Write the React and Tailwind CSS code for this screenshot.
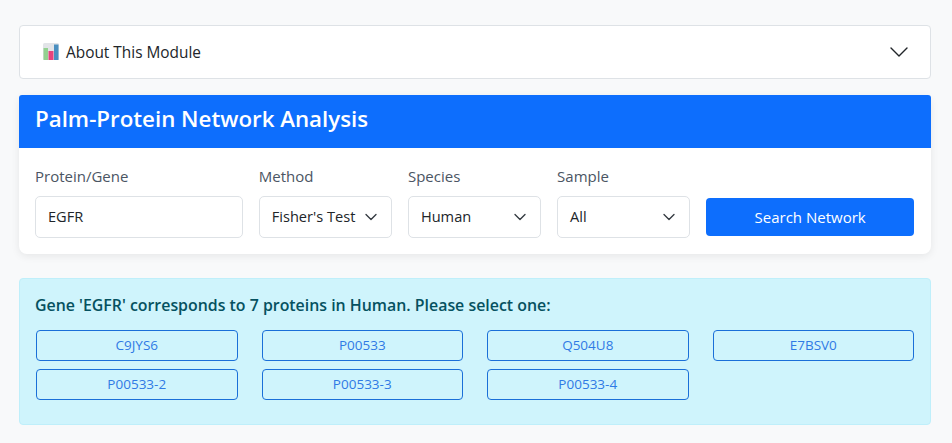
import { ChevronDown } from 'lucide-react';

const PROTEINS = ['C9JYS6', 'P00533', 'Q504U8', 'E7BSV0', 'P00533-2', 'P00533-3', 'P00533-4'];

function ChartEmoji() {
  return (
    <svg width="16" height="17" viewBox="0 0 16 17" className="shrink-0">
      <rect x="0" y="0" width="16" height="17" rx="1.5" fill="#e2e4e8" />
      <rect x="0.5" y="5" width="4.5" height="12" fill="#93d190" />
      <rect x="5.5" y="8" width="5" height="9" fill="#e8437c" />
      <rect x="11" y="1.5" width="4.5" height="15.5" fill="#4a8fc0" />
    </svg>
  );
}

function SelectBox({ value }) {
  return (
    <div className="h-[42px] flex items-center justify-between pl-[12px] pr-[10px] bg-white border border-[#dee2e6] rounded-[5px] text-[14.6px] text-[#212529]">
      <span className="whitespace-nowrap">{value}</span>
      <ChevronDown className="w-5 h-5 shrink-0 text-[#343a40]" strokeWidth={1.6} />
    </div>
  );
}

function Field({ label, span, children }) {
  return (
    <div className={span}>
      <div className="h-[22px] mb-[9px] flex items-center text-[15px] text-[#4b5563]">{label}</div>
      {children}
    </div>
  );
}

export default function App() {
  return (
    <div className="min-h-[443px] bg-[#f8f9fa] pl-[19px] pr-[21px] pt-[25px] font-['Open_Sans','Noto_Sans',sans-serif]">
      {/* About accordion */}
      <div className="h-[54px] flex items-center justify-between pl-[23px] pr-[15px] bg-white border border-[#dee2e6] rounded">
        <div className="flex items-center gap-[7px] text-[15.4px] text-[#212529]">
          <ChartEmoji />
          <span className="pt-[2px]">About This Module</span>
        </div>
        <ChevronDown className="w-8 h-8 text-[#212529]" strokeWidth={1.05} />
      </div>

      {/* Search card */}
      <div className="mt-4 bg-white rounded-lg shadow-[0_2px_8px_rgba(0,0,0,0.08)]">
        <div className="h-[53px] flex items-center px-4 pb-[6px] bg-[#0d6efd] rounded-t-[3px]">
          <h1 className="text-[22.3px] font-semibold text-white">Palm-Protein Network Analysis</h1>
        </div>
        <div className="grid grid-cols-12 gap-4 items-end pl-4 pr-[17px] pt-[17px] pb-4">
          <Field label="Protein/Gene" span="col-span-3">
            <div className="h-[42px] flex items-center px-[12px] bg-white border border-[#dee2e6] rounded-[5px] text-[14.6px] text-[#212529]">
              EGFR
            </div>
          </Field>
          <Field label="Method" span="col-span-2">
            <SelectBox value="Fisher's Test" />
          </Field>
          <Field label="Species" span="col-span-2">
            <SelectBox value="Human" />
          </Field>
          <Field label="Sample" span="col-span-2">
            <SelectBox value="All" />
          </Field>
          <div className="col-span-3 pb-[2px]">
            <button className="w-full h-[38px] bg-[#0d6efd] text-white text-[15px] rounded">Search Network</button>
          </div>
        </div>
      </div>

      {/* Protein picker */}
      <div className="mt-6 h-[147px] px-4 pt-4 bg-[#cff4fc] border border-[#bfeffa] rounded">
        <p className="h-[22px] -ml-px flex items-center text-[15.9px] font-semibold text-[#055160]">
          Gene 'EGFR' corresponds to 7 proteins in Human. Please select one:
        </p>
        <div className="mt-[13px] grid grid-cols-4 gap-x-6 gap-y-2">
          {PROTEINS.map((id) => (
            <button key={id} className="h-[31px] border border-[#1a6fd8] rounded text-[13.5px] text-[#2f7ae5]">
              {id}
            </button>
          ))}
        </div>
      </div>
    </div>
  );
}
